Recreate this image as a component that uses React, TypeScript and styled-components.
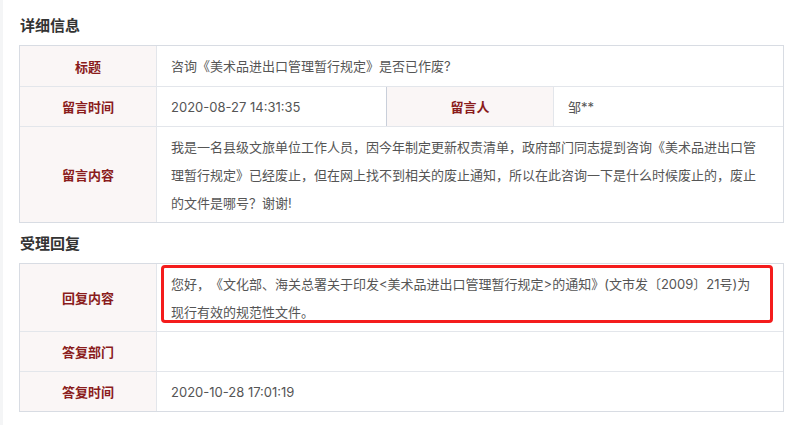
import React from "react";
import styled, { createGlobalStyle } from "styled-components";

const GlobalStyle = createGlobalStyle`
  html, body {
    margin: 0;
    padding: 0;
    background: #ffffff;
  }
  body {
    font-family: "Noto Sans CJK SC", "Noto Sans", sans-serif;
    text-spacing-trim: space-all;
  }
`;

const Page = styled.div`
  width: 800px;
  height: 425px;
  box-sizing: border-box;
  border-left: 3px solid #f4f5f6;
  padding: 5px 16px 0 16px;
  overflow: hidden;
`;

const SectionTitle = styled.h2`
  margin: 0;
  height: 40px;
  line-height: 40px;
  font-size: 15px;
  font-weight: 700;
  color: #333333;
  padding-left: 1px;
`;

const Table = styled.div<{ $cols: string }>`
  display: grid;
  grid-template-columns: ${(p) => p.$cols};
  gap: 1px;
  background: #e3e6eb;
  border: 1px solid #d8dce3;
  width: 765px;
  box-sizing: border-box;
`;

const Label = styled.div<{ $h?: number; $strong?: boolean }>`
  background: #faf6f6;
  color: #8a1c1c;
  font-size: 13px;
  font-weight: 700;
  display: flex;
  align-items: center;
  justify-content: center;
  min-height: ${(p) => p.$h ?? 39}px;
  box-shadow: ${(p) => (p.$strong ? "-1px 0 0 #c9cfda" : "none")};
`;

const valueFont = `"Inter", "Noto Sans CJK SC", sans-serif`;

const Value = styled.div<{ $h?: number; $span?: number }>`
  background: #ffffff;
  color: #555555;
  font-family: ${valueFont};
  font-size: 13px;
  line-height: 28px;
  display: flex;
  align-items: center;
  padding: 0 14px;
  min-height: ${(p) => p.$h ?? 39}px;
  grid-column: span ${(p) => p.$span ?? 1};
`;

const Paragraph = styled.div<{ $span?: number }>`
  background: #ffffff;
  color: #555555;
  font-family: ${valueFont};
  font-size: 13px;
  line-height: 28px;
  padding: 6px 22px 5px 14px;
  grid-column: span ${(p) => p.$span ?? 1};
  position: relative;
  word-break: break-all;
  text-spacing-trim: space-all;
`;

const Highlight = styled.div`
  position: absolute;
  left: 4px;
  top: 1px;
  right: 10px;
  bottom: 8px;
  border: 3px solid #f41c1c;
  border-radius: 4px;
  pointer-events: none;
`;

export default function App() {
  return (
    <>
      <GlobalStyle />
      <Page>
        <SectionTitle>详细信息</SectionTitle>
        <Table $cols="136px 229px 166px 229px">
          <Label $h={40}>标题</Label>
          <Value $h={40} $span={3}>
            咨询《美术品进出口管理暂行规定》是否已作废?
          </Value>
          <Label>留言时间</Label>
          <Value>2020-08-27 14:31:35</Value>
          <Label $strong>留言人</Label>
          <Value>邹**</Value>
          <Label>留言内容</Label>
          <Paragraph $span={3}>
            我是一名县级文旅单位工作人员，因今年制定更新权责清单，政府部门同志提到咨询《美术品进出口管理暂行规定》已经废止，但在网上找不到相关的废止通知，所以在此咨询一下是什么时候废止的，废止的文件是哪号？谢谢!
          </Paragraph>
        </Table>
        <SectionTitle>受理回复</SectionTitle>
        <Table $cols="136px 1fr">
          <Label>回复内容</Label>
          <Paragraph>
            您好，《文化部、海关总署关于印发&lt;美术品进出口管理暂行规定&gt;的通知》(文市发〔2009〕21号)为现行有效的规范性文件。
            <Highlight />
          </Paragraph>
          <Label>答复部门</Label>
          <Value></Value>
          <Label>答复时间</Label>
          <Value>2020-10-28 17:01:19</Value>
        </Table>
      </Page>
    </>
  );
}
